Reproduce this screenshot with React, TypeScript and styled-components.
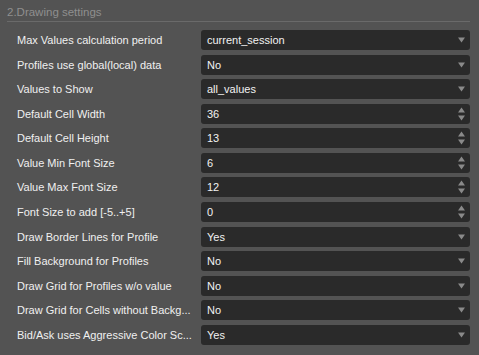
import React from "react";
import styled, { createGlobalStyle } from "styled-components";

const Global = createGlobalStyle`
  html, body { margin: 0; padding: 0; background: #535353; }
  body { font-family: "Liberation Sans", Arial, sans-serif; }
`;

const Panel = styled.div`
  width: 479px;
  height: 355px;
  background: #535353;
  box-sizing: border-box;
  padding: 5px 9px 0 7px;
  overflow: hidden;
`;

const Title = styled.div`
  color: #8f8f8f;
  font-size: 11.5px;
  line-height: 15px;
  padding-bottom: 1px;
  border-bottom: 1px solid #6a6a6a;
`;

const Rows = styled.div`
  display: flex;
  flex-direction: column;
  gap: 4.58px;
  margin-top: 8px;
`;

const Row = styled.div`
  display: grid;
  grid-template-columns: 194px 1fr;
  align-items: center;
  height: 20px;
`;

const Label = styled.div`
  padding-left: 10px;
  color: #f0f0f0;
  font-size: 11px;
  white-space: nowrap;
  overflow: hidden;
`;

const Field = styled.div`
  position: relative;
  height: 20px;
  background: #2a2a2a;
  border-radius: 3px;
  color: #f2f2f2;
  font-size: 11px;
  line-height: 20px;
  padding-left: 6px;
`;

const Arrow = styled.svg`
  position: absolute;
  right: 5px;
  top: 50%;
  transform: translateY(-50%);
`;

type Item = { label: string; value: string; kind: "select" | "spin" };

const items: Item[] = [
  { label: "Max Values calculation period", value: "current_session", kind: "select" },
  { label: "Profiles use global(local) data", value: "No", kind: "select" },
  { label: "Values to Show", value: "all_values", kind: "select" },
  { label: "Default Cell Width", value: "36", kind: "spin" },
  { label: "Default Cell Height", value: "13", kind: "spin" },
  { label: "Value Min Font Size", value: "6", kind: "spin" },
  { label: "Value Max Font Size", value: "12", kind: "spin" },
  { label: "Font Size to add [-5..+5]", value: "0", kind: "spin" },
  { label: "Draw Border Lines for Profile", value: "Yes", kind: "select" },
  { label: "Fill Background for Profiles", value: "No", kind: "select" },
  { label: "Draw Grid for Profiles w/o value", value: "No", kind: "select" },
  { label: "Draw Grid for Cells without Backg...", value: "No", kind: "select" },
  { label: "Bid/Ask uses Aggressive Color Sc...", value: "Yes", kind: "select" },
];

const SelectArrow = () => (
  <Arrow width="7" height="6" viewBox="0 0 7 6">
    <path d="M0 0.5 H7 L3.5 5.5 Z" fill="#8a8a8a" />
  </Arrow>
);

const SpinArrows = () => (
  <Arrow width="7" height="14" viewBox="0 0 7 14">
    <path d="M0 5.5 H7 L3.5 0.5 Z" fill="#8a8a8a" />
    <path d="M0 8.5 H7 L3.5 13.5 Z" fill="#8a8a8a" />
  </Arrow>
);

export default function App() {
  return (
    <>
      <Global />
      <Panel>
        <Title>2.Drawing settings</Title>
        <Rows>
          {items.map((it) => (
            <Row key={it.label}>
              <Label>{it.label}</Label>
              <Field>
                {it.value}
                {it.kind === "select" ? <SelectArrow /> : <SpinArrows />}
              </Field>
            </Row>
          ))}
        </Rows>
      </Panel>
    </>
  );
}
